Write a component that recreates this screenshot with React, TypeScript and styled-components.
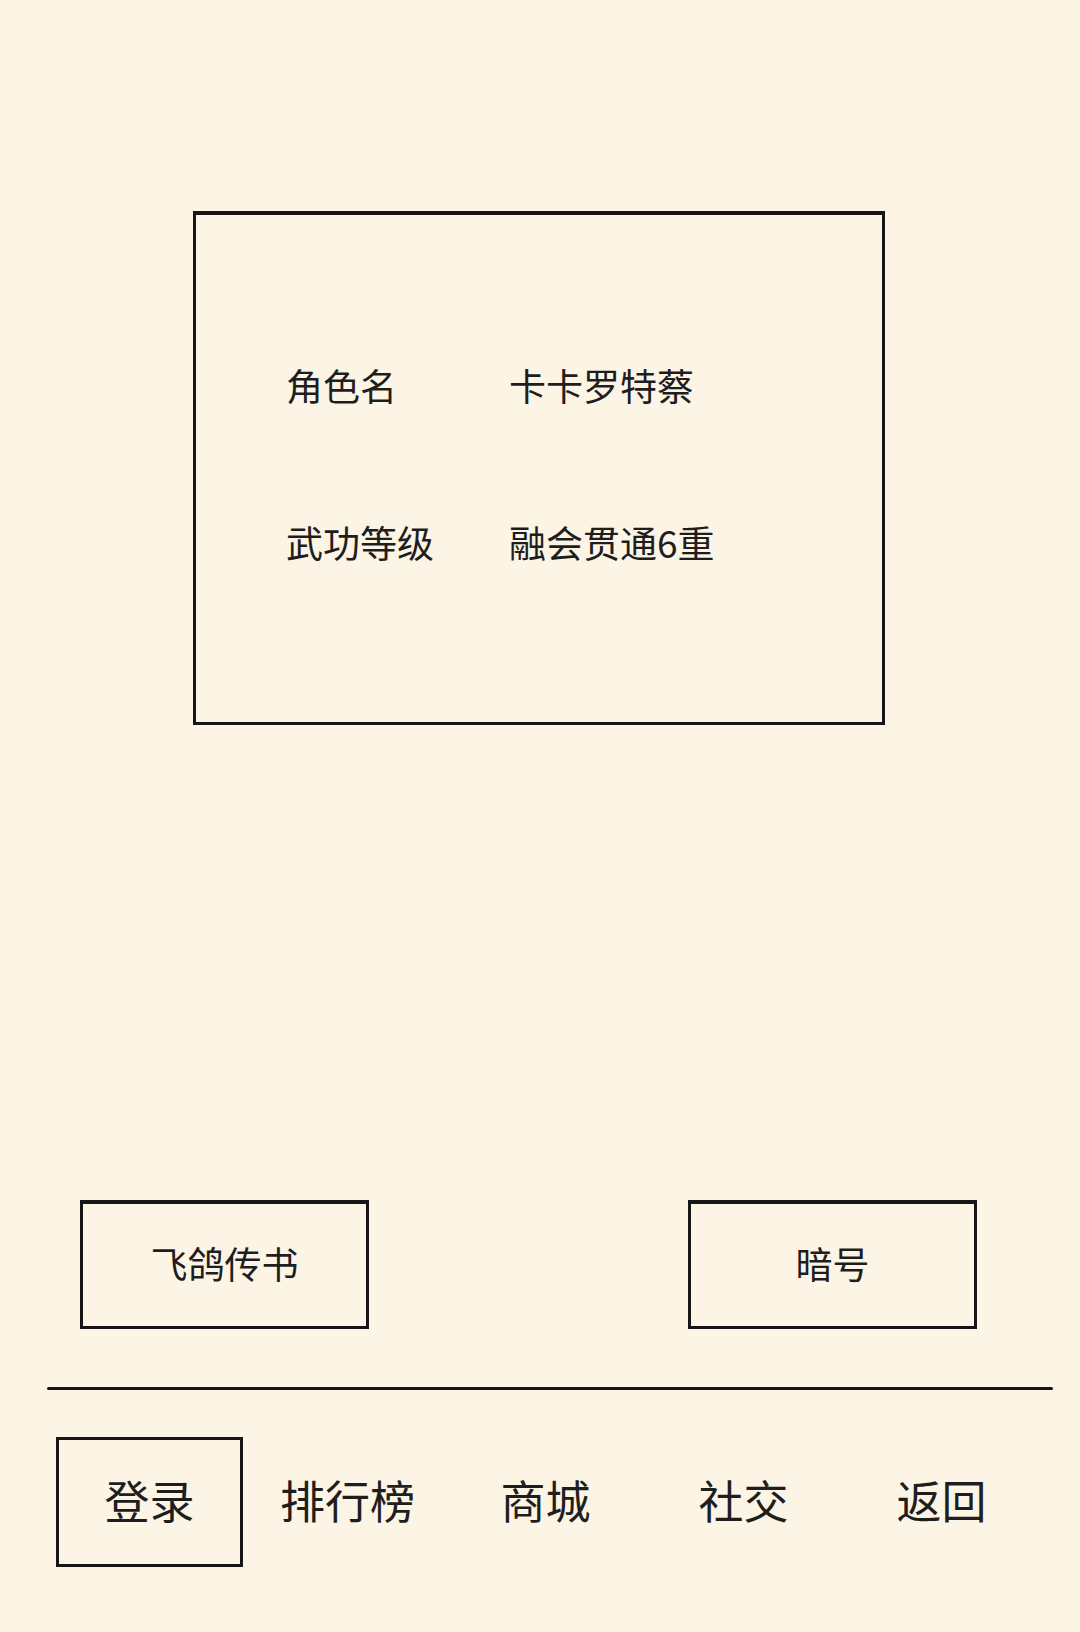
import styled, { createGlobalStyle } from "styled-components";

const GlobalStyle = createGlobalStyle`
  html, body {
    margin: 0;
    padding: 0;
    background: #fcf4e4;
  }
  body {
    font-family: "Noto Sans CJK SC", "Noto Sans", sans-serif;
    color: #1e1e1e;
  }
`;

const profile = [
  { label: "角色名", value: "卡卡罗特蔡" },
  { label: "武功等级", value: "融会贯通6重" },
];

const tabs = ["登录", "排行榜", "商城", "社交", "返回"];

function App() {
  return (
    <Page>
      <GlobalStyle />
      <ProfileCard>
        {profile.map((row) => (
          <InfoRow key={row.label}>
            <Label>{row.label}</Label>
            <Value>{row.value}</Value>
          </InfoRow>
        ))}
      </ProfileCard>

      <ActionRow>
        <ActionButton>飞鸽传书</ActionButton>
        <ActionButton>暗号</ActionButton>
      </ActionRow>

      <Divider />

      <TabBar>
        {tabs.map((t, i) => (
          <Tab key={t} $active={i === 0}>
            {t}
          </Tab>
        ))}
      </TabBar>
    </Page>
  );
}

export default App;

const Page = styled.div`
  width: 1080px;
  height: 1632px;
  box-sizing: border-box;
  padding-top: 211px;
  display: flex;
  flex-direction: column;
  background: #fcf4e4;
  overflow: hidden;
`;

const ProfileCard = styled.div`
  margin-left: 193px;
  width: 692px;
  height: 514px;
  box-sizing: border-box;
  border: 3px solid #161616;
  border-top-width: 4px;
  padding: 152px 0 0 90px;
  display: flex;
  flex-direction: column;
  gap: 120px;
`;

const InfoRow = styled.div`
  display: flex;
  font-size: 37px;
  line-height: 37px;
`;

const Label = styled.span`
  width: 223px;
`;

const Value = styled.span``;

const ActionRow = styled.div`
  margin-top: 475px;
  padding: 0 103px 0 80px;
  display: flex;
  justify-content: space-between;
`;

const ActionButton = styled.button`
  width: 289px;
  height: 129px;
  box-sizing: border-box;
  background: transparent;
  border: 3px solid #161616;
  border-top-width: 4px;
  font-family: "Noto Sans CJK SC", "Noto Sans", sans-serif;
  font-size: 37px;
  line-height: 37px;
  color: #1e1e1e;
  display: flex;
  align-items: center;
  justify-content: center;
  padding: 0 0 3px;
`;

const Divider = styled.div`
  margin: 58px 27px 0 47px;
  height: 3px;
  background: #161616;
  border-radius: 2px;
`;

const TabBar = styled.div`
  margin: 47px 0 0 56px;
  display: grid;
  grid-template-columns: repeat(5, 187px);
  column-gap: 11px;
`;

const Tab = styled.div<{ $active?: boolean }>`
  height: 130px;
  box-sizing: border-box;
  border: 3px solid ${(p) => (p.$active ? "#161616" : "transparent")};
  display: flex;
  align-items: center;
  justify-content: center;
  padding-bottom: 5px;
  font-size: 45px;
  line-height: 45px;
  color: #1e1e1e;
`;
